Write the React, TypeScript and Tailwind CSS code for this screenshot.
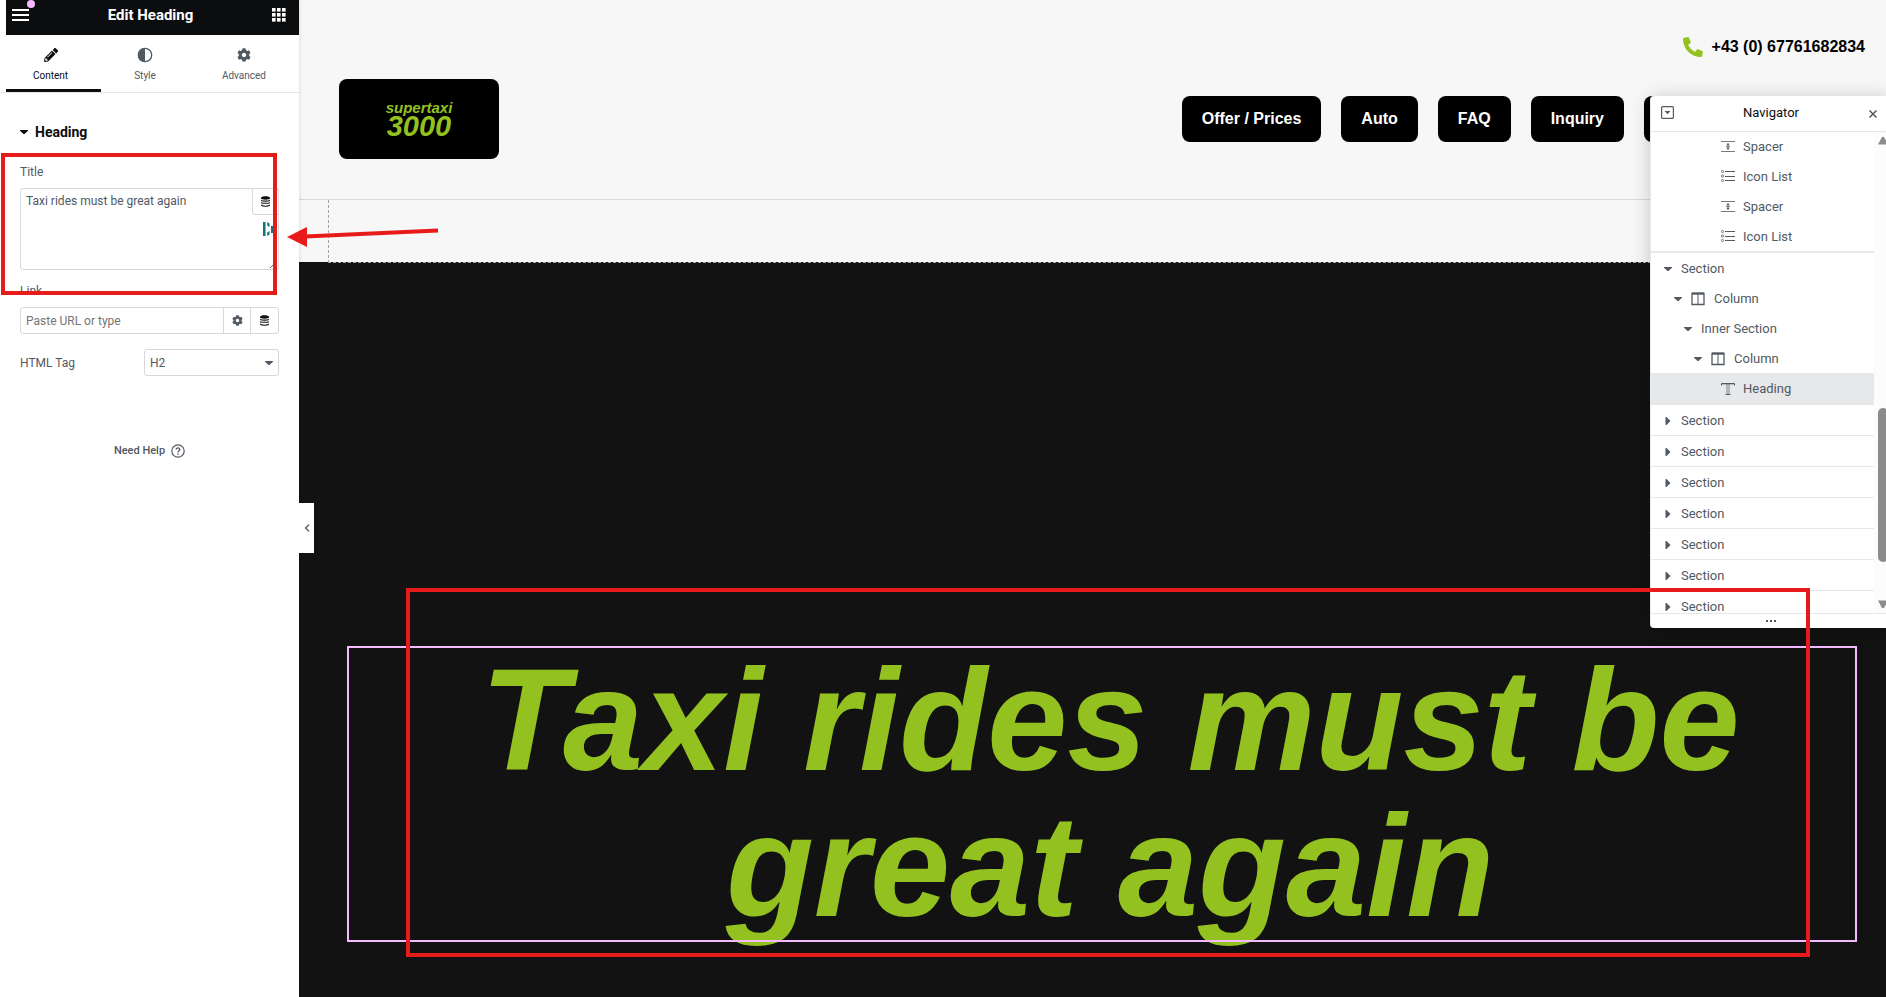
import type { ReactNode } from 'react'
import { FaCog, FaPencilAlt, FaPhoneAlt } from 'react-icons/fa'

type IconName = 'spacer' | 'list' | 'column' | 'heading'

interface TreeNode {
  label: string
  level: number
  icon?: IconName
  arrow?: 'open' | 'closed'
  active?: boolean
}

const navLinks = ['Offer / Prices', 'Auto', 'FAQ', 'Inquiry']

const widgets: TreeNode[] = [
  { label: 'Spacer', level: 4, icon: 'spacer' },
  { label: 'Icon List', level: 4, icon: 'list' },
  { label: 'Spacer', level: 4, icon: 'spacer' },
  { label: 'Icon List', level: 4, icon: 'list' },
]

const openSection: TreeNode[] = [
  { label: 'Section', level: 0, arrow: 'open' },
  { label: 'Column', level: 1, arrow: 'open', icon: 'column' },
  { label: 'Inner Section', level: 2, arrow: 'open' },
  { label: 'Column', level: 3, arrow: 'open', icon: 'column' },
  { label: 'Heading', level: 4, icon: 'heading', active: true },
]

const closedSections = [1, 2, 3, 4, 5, 6, 7]

const indents = ['pl-[13px]', 'pl-[23px]', 'pl-[33px]', 'pl-[43px]', 'pl-[70px]']

function Caret({ closed = false }: { closed?: boolean }) {
  return (
    <svg viewBox="0 0 8 8" className="w-2 h-2 shrink-0" fill="currentColor" aria-hidden="true">
      {closed ? <path d="M1.500 0v8h1L6.500 4l-4-4z" /> : <path d="M0 2v.7L3.500 6h1L8 2.700V2z" />}
    </svg>
  )
}

function DatabaseIcon() {
  return (
    <svg viewBox="0 0 9 11" className="w-[9px] h-[11px]" aria-hidden="true">
      <path d="M0 2C0-.3 9-.3 9 2v.6C9 4 0 4 0 2.600z" fill="#0c0d0e" />
      <g fill="none" stroke="#0c0d0e" strokeWidth="1.100">
        <path d="M.2 4.400c1 .9 7.600.9 8.600 0" />
        <path d="M.2 6.600c1 .9 7.600.9 8.600 0" />
        <path d="M.2 8.700c.4 2 8.200 2 8.600 0" />
      </g>
    </svg>
  )
}

function TreeIcon({ name }: { name: IconName }) {
  return (
    <svg
      viewBox="0 0 14 14"
      className="w-[14px] h-[14px] shrink-0"
      fill="none"
      stroke="currentColor"
      aria-hidden="true"
    >
      {name === 'spacer' && (
        <>
          <path d="M0 1.500h14M0 11.500h14" strokeWidth=".8" />
          <path d="M7 3v7M5 6.500h4" strokeWidth=".7" />
          <path d="M5.300 5.200L7 3.200l1.700 2zM5.300 7.800L7 9.800l1.700-2z" fill="currentColor" stroke="none" />
        </>
      )}
      {name === 'list' && (
        <>
          <path d="M4 1.500h10M4 6.500h10M4 10.500h10" />
          <circle cx="1.500" cy="1.500" r="1.100" strokeWidth=".8" />
          <circle cx="1.500" cy="6" r="1.100" strokeWidth=".8" />
          <circle cx="1.500" cy="10.500" r="1.100" strokeWidth=".8" />
        </>
      )}
      {name === 'column' && (
        <>
          <path d="M1 1.500h12v11H1z" strokeWidth="1.300" />
          <path d="M1 1.500h12" strokeWidth="2.200" />
          <path d="M7 2v10.500" />
        </>
      )}
      {name === 'heading' && (
        <>
          <path d="M.5 3.500v-2h13v2" />
          <path d="M1 2h12" strokeWidth=".6" />
          <path d="M6 2v11M8 2v11" strokeWidth=".7" />
          <path d="M4.500 12.500h5" />
        </>
      )}
    </svg>
  )
}

function TreeRow({ node }: { node: TreeNode }) {
  return (
    <button
      type="button"
      className={`flex w-full items-center text-left ${indents[node.level]} ${
        node.active ? 'h-8 bg-[#e6e8ea]' : 'h-[30px]'
      } ${node.arrow ? 'gap-[9px] pt-[2px]' : 'gap-2'}`}
    >
      {node.arrow && <Caret closed={node.arrow === 'closed'} />}
      {node.icon && <TreeIcon name={node.icon} />}
      <span>{node.label}</span>
    </button>
  )
}

function Tab({ label, icon, active = false }: { label: string; icon: ReactNode; active?: boolean }) {
  return (
    <button
      type="button"
      role="tab"
      aria-selected={active}
      className={`relative flex flex-auto flex-col items-center gap-[5px] pt-3 text-[10px] leading-4 ${
        active ? 'text-[#0c0d0e]' : 'text-[#515962]'
      }`}
    >
      <span className="flex h-4 items-center">{icon}</span>
      {label}
      {active && <span className="absolute bottom-0 left-[6px] right-0 h-[3px] bg-[#0c0d0e]" />}
    </button>
  )
}

function EditorPanel() {
  return (
    <aside className="relative z-10 w-[299px] shrink-0 bg-white text-xs text-[#515962] shadow-[0_0_4px_rgba(0,0,0,0.15)]">
      <header className="ml-[6px] flex h-[35px] items-center justify-between bg-[#0c0d0e] pb-[6px] pl-[6px] pr-[13px] text-white">
        <button type="button" aria-label="Menu">
          <svg viewBox="0 0 17 13" className="w-[17px] h-[13px]" stroke="white" strokeWidth="2">
            <path d="M0 2h17M0 7h17M0 12h17" />
          </svg>
        </button>
        <h1 className="text-[15px] font-bold leading-5">Edit Heading</h1>
        <button type="button" aria-label="Widgets">
          <svg viewBox="0 0 14 14" className="w-[14px] h-[14px]" fill="white">
            {[0, 5, 10].map((y) =>
              [0, 5, 10].map((x) => <rect key={`${x}-${y}`} x={x} y={y} width="3.600" height="3.600" />)
            )}
          </svg>
        </button>
      </header>
      <span className="absolute left-[27px] top-0 h-2 w-2 rounded-full bg-[#f3bafd]" />

      <div role="tablist" className="flex h-[58px] border-b border-[#e6e8ea]">
        <Tab active label="Content" icon={<FaPencilAlt className="w-[14px] h-[14px]" />} />
        <Tab
          label="Style"
          icon={
            <svg viewBox="0 0 16 16" className="w-4 h-4">
              <circle cx="8" cy="8" r="6.700" fill="none" stroke="currentColor" strokeWidth="1.300" />
              <path d="M8 1a7 7 0 0 0 0 14z" fill="currentColor" />
            </svg>
          }
        />
        <Tab label="Advanced" icon={<FaCog className="w-[14px] h-[14px]" />} />
      </div>

      <div className="px-5 pt-[27px]">
        <button
          type="button"
          className="flex items-center gap-[7px] text-sm font-bold leading-6 text-[#0c0d0e]"
        >
          <Caret />
          Heading
        </button>

        <label htmlFor="title" className="mt-5 block leading-4">
          Title
        </label>
        <div className="relative mt-2">
          <textarea
            id="title"
            defaultValue="Taxi rides must be great again"
            className="block h-[82px] w-full rounded-[3px] border border-[#d5d8dc] px-[5px] py-1 leading-4"
          />
          <button
            type="button"
            aria-label="Dynamic title"
            className="absolute right-0 top-0 flex h-[27px] w-[27px] items-center justify-center rounded-bl-[3px] rounded-tr-[3px] border border-[#d5d8dc] bg-white"
          >
            <DatabaseIcon />
          </button>
          <svg
            viewBox="0 0 15 14"
            className="absolute right-[1px] top-[34px] h-[14px] w-[15px]"
            fill="#13707f"
            aria-hidden="true"
          >
            <rect width="2.500" height="14" />
            <path d="M4.200 0L6.500 1.500V5L4.200 3.500zM4.200 14l2.300-1.500V9L4.200 10.500z" />
            <rect x="8" y="4" width="2.500" height="7" />
          </svg>
        </div>

        <label htmlFor="link" className="mt-[13px] block leading-4">
          Link
        </label>
        <div className="mt-2 flex h-[27px] divide-x divide-[#d5d8dc] rounded-[3px] border border-[#d5d8dc]">
          <input
            id="link"
            type="text"
            placeholder="Paste URL or type"
            className="min-w-0 flex-1 px-[5px] placeholder:text-[#757575]"
          />
          <button type="button" aria-label="Link options" className="flex w-[27px] items-center justify-center">
            <FaCog className="w-[11px] h-[11px]" />
          </button>
          <button type="button" aria-label="Dynamic link" className="flex w-[27px] items-center justify-center">
            <DatabaseIcon />
          </button>
        </div>

        <div className="mt-[15px] flex items-center justify-between">
          <label htmlFor="tag">HTML Tag</label>
          <div className="relative w-[135px]">
            <select
              id="tag"
              defaultValue="H2"
              className="block h-[27px] w-full appearance-none rounded-[3px] border border-[#d5d8dc] px-[5px]"
            >
              <option>H2</option>
            </select>
            <span className="pointer-events-none absolute right-[6px] top-[10px]">
              <Caret />
            </span>
          </div>
        </div>

        <a
          href="#help"
          className="mt-[67px] flex items-center justify-center gap-[6px] text-[11px] font-medium leading-4"
        >
          Need Help
          <svg viewBox="0 0 14 14" className="w-[14px] h-[14px]" fill="none" stroke="currentColor" aria-hidden="true">
            <circle cx="7" cy="7" r="6.200" strokeWidth="1.200" />
            <path d="M5.200 5.500c0-2.200 3.600-2.200 3.600 0 0 1.300-1.800 1.200-1.800 2.700M7 9.300v1.400" strokeWidth="1.300" />
          </svg>
        </a>
      </div>

      <button
        type="button"
        aria-label="Hide panel"
        className="absolute left-full top-[503px] flex h-[50px] w-[15px] items-center justify-center bg-white"
      >
        <svg viewBox="0 0 6 8" className="w-[6px] h-2" fill="none" stroke="#515962" strokeWidth="1.300">
          <path d="M5 .8L1.500 4 5 7.200" />
        </svg>
      </button>
    </aside>
  )
}

function SitePreview() {
  return (
    <main className="flex min-w-0 flex-1 flex-col bg-[#f7f7f7] font-['Liberation_Sans',Arial,sans-serif]">
      <header className="flex h-[200px] items-start justify-between border-b border-[#d5d8dc] pl-10 pr-[21px]">
        <a
          href="#home"
          className="mt-[79px] flex h-20 w-40 flex-col items-center justify-center rounded-lg bg-black font-bold italic text-[#93c11f]"
        >
          <span className="text-[15px] leading-[14px]">supertaxi</span>
          <span className="text-[29px] leading-[22px]">3000</span>
        </a>
        <div className="flex flex-col items-end gap-[38px] pt-[35px] text-base font-bold">
          <a href="tel:+4367761682834" className="flex items-center gap-[9px] leading-[23px]">
            <FaPhoneAlt className="h-5 w-5 rotate-270 -scale-y-100 text-[#93c11f]" />
            +43 (0) 67761682834
          </a>
          <nav className="flex h-[46px] gap-5 text-white">
            {navLinks.map((link) => (
              <a key={link} href="#page" className="flex items-center rounded-lg bg-black px-5">
                {link}
              </a>
            ))}
            <span className="w-[221px] rounded-lg bg-black" />
          </nav>
        </div>
      </header>

      <div className="relative ml-[29px] h-[63px] border-b border-l border-dashed border-[#9da5ae]" />

      <section className="-mt-px flex-1 bg-[#121212] pb-[57px] pl-[50px] pr-[31px] pt-[386px]">
        <h2 className="pl-4 text-center text-[144px] font-bold italic leading-[146px] text-[#93c11f] outline-2 outline-[#f3bafd]">
          Taxi rides must be great again
        </h2>
      </section>
    </main>
  )
}

function Navigator() {
  return (
    <section className="absolute -right-[5px] top-24 z-20 flex h-[532px] w-[241px] flex-col overflow-hidden rounded border-l border-[#e6e8ea] bg-white text-[13px] text-[#515962] shadow-[0_2px_20px_rgba(0,0,0,0.2)]">
      <header className="flex h-9 shrink-0 items-center justify-between border-b border-[#e6e8ea] pb-[2px] pl-[10px] pr-[13px]">
        <button type="button" aria-label="Expand all">
          <svg viewBox="0 0 13 13" className="w-[13px] h-[13px]" fill="none" stroke="currentColor">
            <rect x=".6" y=".6" width="11.800" height="11.800" rx="1" strokeWidth="1.200" />
            <path d="M3.500 5h6l-3 3.200z" fill="currentColor" stroke="none" />
          </svg>
        </button>
        <h3 className="text-[#0c0d0e]">Navigator</h3>
        <button type="button" aria-label="Close" className="pt-[2px]">
          <svg viewBox="0 0 10 10" className="w-[10px] h-[10px]" stroke="currentColor" strokeWidth="1.500">
            <path d="M1.500 1.500l7 7M8.500 1.500l-7 7" />
          </svg>
        </button>
      </header>

      <div className="flex min-h-0 flex-1">
        <div className="flex-1 overflow-hidden">
          <div className="h-[121px] border-b-2 border-[#e6e8ea]">
            {widgets.map((node, i) => (
              <TreeRow key={i} node={node} />
            ))}
          </div>
          {openSection.map((node, i) => (
            <TreeRow key={i} node={node} />
          ))}
          {closedSections.map((n) => (
            <div key={n} className="border-b border-[#e6e8ea]">
              <TreeRow node={{ label: 'Section', level: 0, arrow: 'closed' }} />
            </div>
          ))}
        </div>
        {/* scrollbar */}
        <div className="flex w-[17px] flex-col items-center bg-[#fcfcfc] py-[5px] text-[#8b8b8b]">
          <svg viewBox="0 0 10 8" className="w-[10px] h-2" fill="currentColor">
            <path d="M0 7.500L4 0h2l4 7.500z" />
          </svg>
          <div className="mt-[263px] h-[154px] w-[10px] rounded-full bg-[#8b8b8b]" />
          <svg viewBox="0 0 10 8" className="mt-auto w-[10px] h-2" fill="currentColor">
            <path d="M0 .5L4 8h2l4-7.500z" />
          </svg>
        </div>
      </div>

      <footer className="flex h-[15px] shrink-0 items-center justify-center border-t border-[#e6e8ea]">
        <svg viewBox="0 0 10 2" className="w-[10px] h-[2px]" fill="currentColor">
          <path d="M0 0h2v2H0zM4 0h2v2H4zM8 0h2v2H8z" />
        </svg>
      </footer>
    </section>
  )
}

// Red marker boxes and the arrow drawn over the editor
function Annotations() {
  return (
    <div className="pointer-events-none absolute inset-0 z-30" aria-hidden="true">
      <div className="absolute left-px top-[153px] h-[142px] w-[276px] border-4 border-[#e81b1b]" />
      <svg viewBox="0 0 152 24" className="absolute left-[287px] top-[225px] h-6 w-[152px]">
        <path d="M0 12L20 2v20z" fill="#e81b1b" />
        <path d="M18 11.500L151 5.500" stroke="#e81b1b" strokeWidth="4" />
      </svg>
      <div className="absolute left-[406px] right-[76px] top-[588px] h-[369px] border-4 border-[#e81b1b]" />
    </div>
  )
}

export default function App() {
  return (
    <div className="relative flex min-h-screen overflow-hidden bg-white font-['Roboto',sans-serif]">
      <EditorPanel />
      <SitePreview />
      <Navigator />
      <Annotations />
    </div>
  )
}
